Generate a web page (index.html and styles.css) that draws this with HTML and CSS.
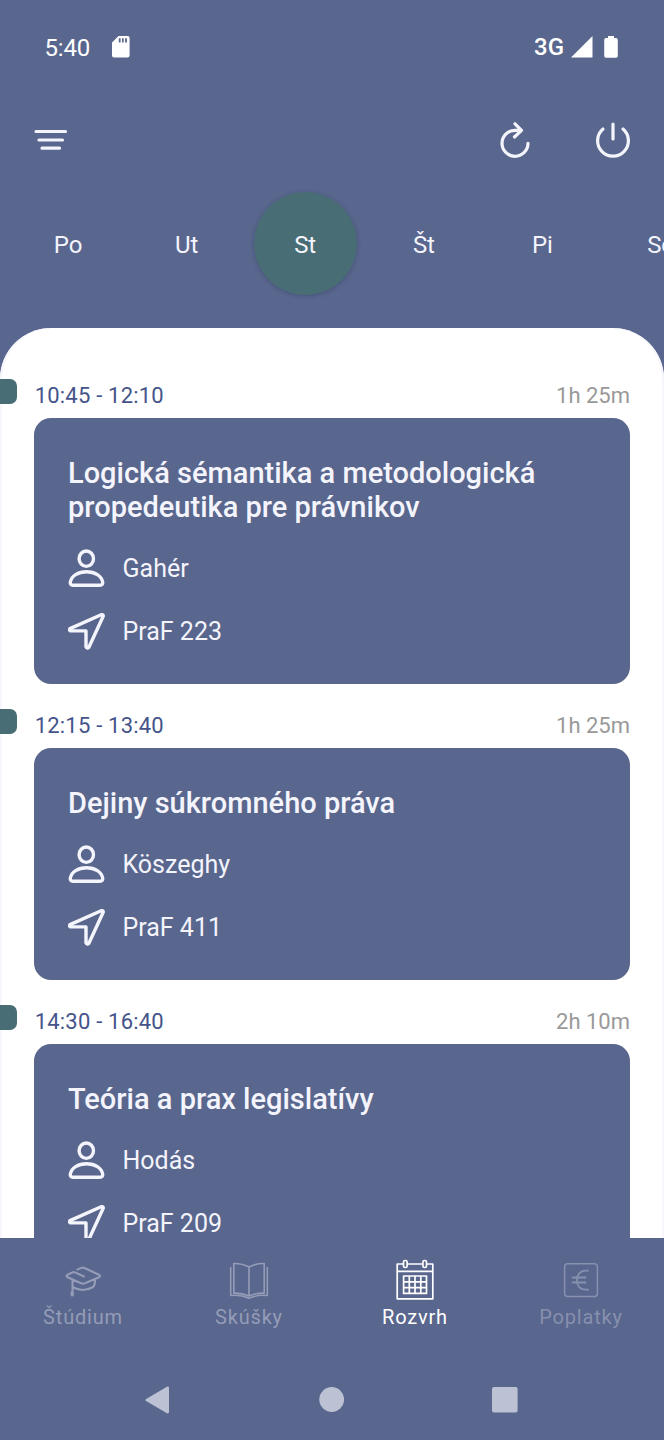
FILE: index.html
```html
<!DOCTYPE html>
<html lang="sk">
<head>
<meta charset="utf-8">
<title>Rozvrh</title>
<link rel="stylesheet" href="styles.css">
</head>
<body>
<svg width="0" height="0" class="defs">
  <symbol id="person" viewBox="0 0 38 38">
    <ellipse cx="18.300" cy="9.700" rx="7.200" ry="7.700"/>
    <path d="M5 36.200H32Q35 36.200 34.700 33C33.500 26.900 27 22.700 18.500 22.700S3.500 26.900 2.300 33Q2 36.200 5 36.200Z"/>
  </symbol>
  <symbol id="arrow" viewBox="0 0 38 38">
    <path d="M33.200 2.700L2 16.600Q.8 18.200 2.500 18.900H18V34.800Q19.100 37.200 20.900 35.300L35.200 4.200Q35.500 2.200 33.200 2.700Z"/>
  </symbol>
</svg>
<div class="phone">
  <header class="status">
    <div class="status-left">
      <span>5:40</span>
      <svg class="sd" width="18" height="22" viewBox="0 0 18 22"><path fill="#fff" fill-rule="evenodd" d="M6.500 0H15.500Q17.600 0 17.600 2V19.500Q17.600 21.500 15.600 21.500H2Q0 21.500 0 19.500V6.500ZM6.800 2.300V6.500H8.600V2.300ZM10 2.300V6.500H11.700V2.300ZM13.100 2.300V6.500H14.900V2.300Z"/></svg>
    </div>
    <div class="status-right">
      <span>3G</span>
      <svg width="22" height="22" viewBox="0 0 22 22"><path fill="#fff" d="M0 21.500L21.500 0V21.500Z"/></svg>
      <svg class="battery" width="14" height="22" viewBox="0 0 14 22"><path fill="#fff" d="M4 0H10V2H12Q13.800 2 13.800 4V20Q13.800 21.700 12 21.700H2Q.2 21.700 .2 20V4Q.2 2 2 2H4Z"/></svg>
    </div>
  </header>
  <div class="toolbar">
    <svg class="line-icon" width="34" height="24" viewBox="0 0 34 24"><path d="M2 3.500H31.500M5 12H28.500M8 20.200H25.500"/></svg>
    <div class="actions">
      <svg class="line-icon" width="30" height="36" viewBox="0 0 30 36"><path d="M21.500 8.300H15A13 13 0 1 0 28 21.300M15 1.800L21.500 8.300L14.500 15" /></svg>
      <svg class="line-icon" width="36" height="36" viewBox="0 0 36 36"><path d="M18 2V17M8 7A15.400 15.400 0 1 0 28 7"/></svg>
    </div>
  </div>
  <nav class="days">
    <span class="day">Po</span><span class="day">Ut</span><span class="day active">St</span><span class="day">Št</span><span class="day">Pi</span><span class="day">So</span>
  </nav>
  <main class="panel">
    <section class="lesson">
      <div class="lesson-head"><i class="marker"></i><span class="time">10:45 - 12:10</span><span class="duration">1h 25m</span></div>
      <article class="card">
        <h2>Logická sémantika a metodologická propedeutika pre právnikov</h2>
        <div class="row"><svg class="row-icon"><use href="#person"/></svg>Gahér</div>
        <div class="row"><svg class="row-icon"><use href="#arrow"/></svg>PraF 223</div>
      </article>
    </section>
    <section class="lesson">
      <div class="lesson-head"><i class="marker"></i><span class="time">12:15 - 13:40</span><span class="duration">1h 25m</span></div>
      <article class="card">
        <h2>Dejiny súkromného práva</h2>
        <div class="row"><svg class="row-icon"><use href="#person"/></svg>Köszeghy</div>
        <div class="row"><svg class="row-icon"><use href="#arrow"/></svg>PraF 411</div>
      </article>
    </section>
    <section class="lesson">
      <div class="lesson-head"><i class="marker"></i><span class="time">14:30 - 16:40</span><span class="duration">2h 10m</span></div>
      <article class="card">
        <h2>Teória a prax legislatívy</h2>
        <div class="row"><svg class="row-icon"><use href="#person"/></svg>Hodás</div>
        <div class="row"><svg class="row-icon"><use href="#arrow"/></svg>PraF 209</div>
      </article>
    </section>
  </main>
  <nav class="tabs">
    <div class="tab">
      <svg width="40" height="42" viewBox="0 0 40 42"><path stroke-width="2.100" d="M14.500 10.500L18.500 8.900Q20 8.400 21.500 9L36 15.700Q38 17 36 18.200L22 24.200Q20 25 18 24.200L4.500 18.200Q2.500 17 4.500 15.800L9.500 13.400Q10.800 12.900 12 13.400L21 17.500M9.500 20.500V35M9.500 28Q20 34 30 28Q32 26.500 32 21"/><path stroke-width="3.200" d="M9.200 33.500V36"/></svg>
      <span>Štúdium</span>
    </div>
    <div class="tab">
      <svg width="40" height="42" viewBox="0 0 40 42"><path stroke-width="1.600" d="M20 8Q13 4.300 4.800 4.500V34.200Q13 33.800 20 37Q27 33.800 35.200 34.200V4.500Q27 4.300 20 8V37M1.700 8.500V36.500Q12 35.500 20 39.300Q28 35.500 38.300 36.500V8.500"/></svg>
      <span>Skúšky</span>
    </div>
    <div class="tab selected">
      <svg width="40" height="42" viewBox="0 0 40 42"><path stroke-width="1.700" d="M8 5H2.200V39.800H37.800V5H32M12.500 5H27.500M2.200 12.400H37.800M8.600 17H31.500V34.400H8.600ZM8.600 22.800H31.500M8.600 28.600H31.500M14.300 17V34.400M20 17V34.400M25.800 17V34.400"/><rect x="8.500" y="1.500" width="3.600" height="7" rx="1.500" stroke-width="1.700"/><rect x="27.900" y="1.500" width="3.600" height="7" rx="1.500" stroke-width="1.700"/></svg>
      <span>Rozvrh</span>
    </div>
    <div class="tab euro">
      <svg width="40" height="42" viewBox="0 0 40 42"><rect x="3.600" y="4.800" width="32.800" height="32.800" rx="3" stroke-width="1.500"/><path stroke-width="1.800" d="M27 11.700H24.500C13 11.700 13 30.700 24.500 30.700H27M11.500 18.500H24.500M11.500 23.500H24.500"/></svg>
      <span>Poplatky</span>
    </div>
  </nav>
  <footer class="system-nav">
    <svg width="26" height="28" viewBox="0 0 26 28"><path d="M2.500 15.300Q.3 14 2.500 12.700L22.500 .9Q25 0 25 2V26Q25 28 22.500 27.100Z"/></svg>
    <svg width="26" height="28" viewBox="0 0 26 28"><circle cx="13.700" cy="13.500" r="12.400"/></svg>
    <svg width="26" height="28" viewBox="0 0 26 28"><rect x="0" y="1" width="25.600" height="25.600" rx="2"/></svg>
  </footer>
</div>
</body>
</html>
```
FILE: styles.css
```css
* { box-sizing: border-box; }
body { margin: 0; font-family: Roboto, sans-serif; }
svg { display: block; flex: none; }
.defs { position: absolute; }
.phone {
  width: 664px;
  height: 1440px;
  display: flex;
  flex-direction: column;
  overflow: hidden;
  background: #59668d;
  color: #f4f4fc;
}
.status {
  height: 94px;
  padding: 0 46px 0 44.500px;
  display: flex;
  justify-content: space-between;
  align-items: center;
  font-size: 24px;
  color: #fff;
}
.status-left, .status-right { display: flex; align-items: center; }
.status-left { gap: 22px; letter-spacing: -.2px; }
.status-left span { padding-top: 1px; }
.status-right { gap: 7px; font-weight: 500; }
.battery { margin-left: 4px; }
.toolbar {
  height: 92px;
  padding: 0 33px 0 34px;
  display: flex;
  justify-content: space-between;
  align-items: center;
}
.actions { display: flex; gap: 65.500px; }
.line-icon {
  fill: none;
  stroke: #f4f4fc;
  stroke-width: 3.2;
  stroke-linecap: round;
  stroke-linejoin: round;
}
.days {
  height: 142px;
  flex: none;
  padding: 6px 0 0 8.700px;
  display: flex;
}
.day {
  flex: none;
  width: 103px;
  height: 103px;
  margin-right: 15.600px;
  padding-top: 2px;
  display: grid;
  place-items: center;
  border-radius: 50%;
  font-size: 24px;
  letter-spacing: -.2px;
}
.day:first-child { margin-left: 7.800px; }
.active { background: #496d75; box-shadow: 0 1px 4px rgba(30, 40, 80, .3); }
.panel {
  height: 910px;
  flex: none;
  padding-top: 25.500px;
  overflow: hidden;
  background: #fff;
  border-radius: 51px 51px 0 0;
  box-shadow: inset -2px 0 #f6f6fc, inset 2px 0 #f6f6fc;
}
.lesson-head {
  height: 64.500px;
  padding: 25px 34px 0 0;
  display: flex;
  align-items: flex-start;
  font-size: 22px;
  line-height: 33px;
}
.marker {
  width: 17px;
  height: 25px;
  margin-right: 17.700px;
  border-radius: 0 7px 7px 0;
  background: #496d75;
}
.time { color: #44548a; letter-spacing: .2px; }
.duration { margin-left: auto; color: #999; }
.card {
  margin: 0 34px;
  padding: 38px 34px 33.500px;
  border-radius: 17px;
  background: #59668d;
}
.card h2 {
  margin: 0 0 25px;
  font-size: 29px;
  font-weight: 500;
  line-height: 34px;
}
.row {
  height: 38px;
  display: flex;
  align-items: center;
  gap: 16.500px;
  font-size: 25px;
}
.row + .row { margin-top: 25px; }
.row-icon {
  width: 38px;
  height: 38px;
  fill: none;
  stroke: #f4f4fc;
  stroke-width: 3.4;
  stroke-linejoin: round;
}
.tabs { height: 121px; flex: none; display: flex; z-index: 1; background: #59668d; }
.tab {
  width: 166px;
  padding-top: 21px;
  display: flex;
  flex-direction: column;
  align-items: center;
  gap: 4px;
  color: #949cb7;
  font-size: 20px;
  line-height: 24px;
  letter-spacing: .8px;
}
.tab svg { fill: none; stroke: currentColor; stroke-linejoin: round; stroke-linecap: round; }
.selected { color: #fff; }
.euro { color: #8790ae; }
.system-nav {
  height: 81px;
  padding: 0 146px 0 144px;
  display: flex;
  justify-content: space-between;
  align-items: center;
}
.system-nav svg { fill: #bcc2d3; }
```
